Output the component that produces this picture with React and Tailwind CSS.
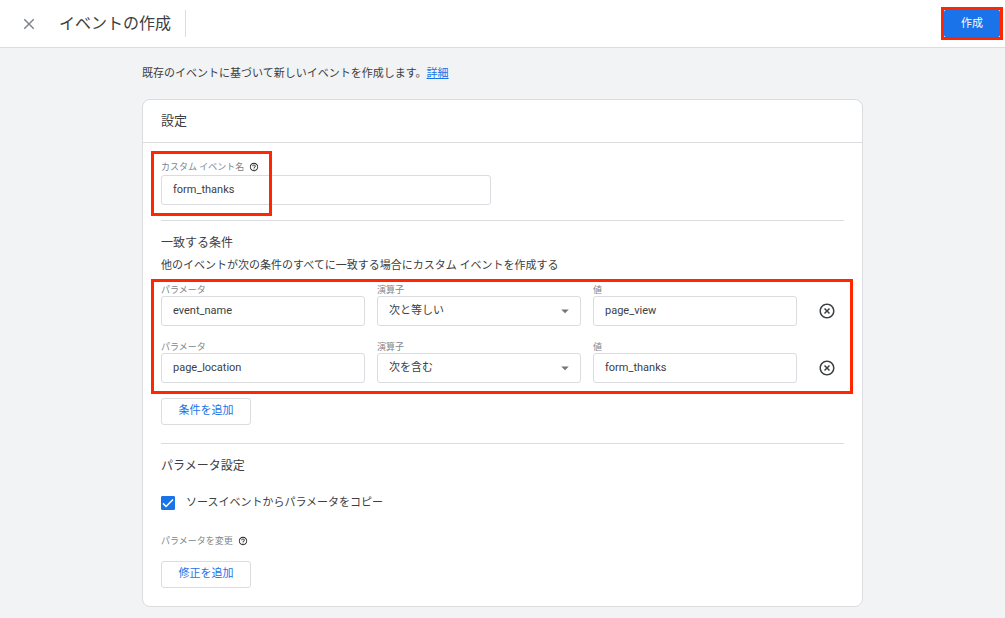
import React from 'react';
import { MdArrowDropDown, MdClose, MdHelpOutline, MdHighlightOff } from 'react-icons/md';

const OPERATORS = ['次と等しい', '次を含む', '次で始まる', '次で終わる'];

const CONDITIONS = [
  { id: 1, param: 'event_name', operator: '次と等しい', value: 'page_view' },
  { id: 2, param: 'page_location', operator: '次を含む', value: 'form_thanks' },
];

const fieldClass =
  'block h-[30px] w-full rounded-[3px] border border-[#dadce0] bg-white px-[11px] text-[11px] text-[#3c4043] outline-none focus:border-[#1a73e8]';
const labelClass = 'block text-[9px] leading-3 text-[#80868b]';

function Highlight({ className }) {
  return (
    <div aria-hidden="true" className={`pointer-events-none absolute border-3 border-[#ff2600] ${className}`} />
  );
}

function OutlineButton({ children }) {
  return (
    <button
      type="button"
      className="flex h-[27px] w-[90px] items-center justify-center rounded-[3px] border border-[#dadce0] bg-white text-[11px] text-[#1a73e8] hover:bg-[#f8fbff]"
    >
      {children}
    </button>
  );
}

function HelpButton({ label }) {
  return (
    <button type="button" aria-label={label} className="text-[#202124]">
      <MdHelpOutline className="size-[10px]" />
    </button>
  );
}

function ConditionRow({ condition }) {
  const { id, param, operator, value } = condition;
  return (
    <div className="grid grid-cols-[1fr_1fr_1fr_35px] items-end gap-3">
      <div>
        <label htmlFor={`param-${id}`} className={labelClass}>パラメータ</label>
        <input id={`param-${id}`} type="text" defaultValue={param} className={`${fieldClass} pb-[2px]`} />
      </div>
      <div>
        <label htmlFor={`operator-${id}`} className={labelClass}>演算子</label>
        <div className="relative">
          <select id={`operator-${id}`} defaultValue={operator} className={`${fieldClass} appearance-none`}>
            {OPERATORS.map((op) => (
              <option key={op}>{op}</option>
            ))}
          </select>
          <MdArrowDropDown className="pointer-events-none absolute top-1.5 right-[7px] size-[18px] text-[#757575]" />
        </div>
      </div>
      <div>
        <label htmlFor={`value-${id}`} className={labelClass}>値</label>
        <input id={`value-${id}`} type="text" defaultValue={value} className={`${fieldClass} pb-[2px]`} />
      </div>
      <button type="button" aria-label="条件を削除" className="flex h-[30px] items-center justify-center text-[#3c4043]">
        <MdHighlightOff className="size-[18px]" />
      </button>
    </div>
  );
}

export default function App() {
  return (
    <div
      lang="ja"
      className="min-h-screen bg-[#f1f3f4] font-['Roboto','Noto_Sans_CJK_JP',sans-serif] text-[11px] text-[#3c4043]"
    >
      <header className="flex h-12 items-center justify-between border-b border-[#dadce0] bg-white pr-[5px] pl-5">
        <div className="flex items-center">
          <button type="button" aria-label="閉じる" className="text-[#80868b]">
            <MdClose className="size-[18px]" />
          </button>
          <h1 className="ml-[21px] flex h-[27px] items-center border-r border-[#dadce0] pr-[14px] text-base">
            イベントの作成
          </h1>
        </div>
        <div className="relative">
          <button
            type="button"
            className="flex h-[27px] w-14 items-center justify-center rounded-[2px] bg-[#1a73e8] pt-[2px] text-[11px] text-white"
          >
            作成
          </button>
          <Highlight className="-inset-[3px]" />
        </div>
      </header>

      <main className="mx-auto max-w-[721px] pt-[18px] pb-[11px]">
        <p className="leading-4">
          既存のイベントに基づいて新しいイベントを作成します。
          <a href="#details" className="text-[#1a73e8] underline">詳細</a>
        </p>

        <div className="mt-[17px] rounded-lg border border-[#dadce0] bg-white">
          <h2 className="flex h-[43px] items-center border-b border-[#dadce0] px-[18px] text-[13px]">
            設定
          </h2>

          <div className="px-[18px] pb-[18px]">
            {/* Event name */}
            <section className="pt-4 pb-[15px]">
              <div className="relative max-w-[330px]">
                <div className="flex h-4 items-center gap-[5px]">
                  <label htmlFor="event-name" className={labelClass}>カスタム イベント名</label>
                  <HelpButton label="カスタム イベント名のヘルプ" />
                </div>
                <input id="event-name" type="text" defaultValue="form_thanks" className={`${fieldClass} pb-[2px]`} />
                <Highlight className="-top-2 -bottom-[11px] -left-[10px] w-[121px]" />
              </div>
            </section>

            {/* Matching conditions */}
            <section className="border-t border-[#dadce0] pt-[14px] pb-[18px]">
              <h3 className="text-xs leading-4">一致する条件</h3>
              <p className="mt-[7px] leading-4">
                他のイベントが次の条件のすべてに一致する場合にカスタム イベントを作成する
              </p>
              <div className="relative mt-[10px] mb-[15px] grid gap-[15px]">
                {CONDITIONS.map((condition) => (
                  <ConditionRow key={condition.id} condition={condition} />
                ))}
                <Highlight className="-top-[5px] -right-[9px] -bottom-[11px] -left-[10px]" />
              </div>
              <OutlineButton>条件を追加</OutlineButton>
            </section>

            {/* Parameter settings */}
            <section className="border-t border-[#dadce0] pt-[14px]">
              <h3 className="text-xs leading-4">パラメータ設定</h3>
              <div className="mt-[21px] flex h-4 items-center">
                <div className="relative size-[14px]">
                  <input
                    id="copy-params"
                    type="checkbox"
                    defaultChecked
                    className="peer block size-[14px] appearance-none rounded-[1px] border border-[#80868b] checked:border-[#1a73e8] checked:bg-[#1a73e8]"
                  />
                  <svg
                    viewBox="0 0 14 14"
                    className="pointer-events-none absolute inset-0 hidden size-[14px] peer-checked:block"
                    fill="none"
                    stroke="#fff"
                    strokeWidth="1.5"
                  >
                    <path d="M2 7.4 5.1 10.5 12 3.4" />
                  </svg>
                </div>
                <label htmlFor="copy-params" className="ml-[11px] leading-4">
                  ソースイベントからパラメータをコピー
                </label>
              </div>
              <div className="mt-[22px] mb-3 flex h-4 items-center gap-[5px]">
                <span className={labelClass}>パラメータを変更</span>
                <HelpButton label="パラメータを変更のヘルプ" />
              </div>
              <OutlineButton>修正を追加</OutlineButton>
            </section>
          </div>
        </div>
      </main>
    </div>
  );
}
